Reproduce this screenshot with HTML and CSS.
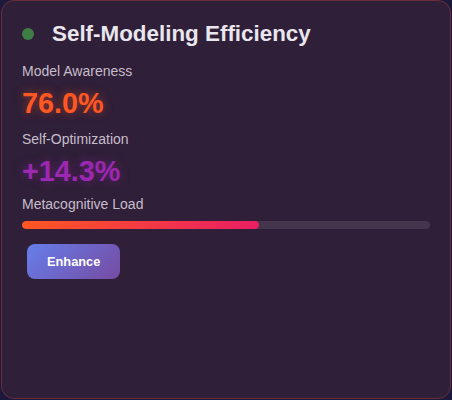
FILE: index.html
```html
<!DOCTYPE html>
<html lang="en">
<head>
<meta charset="utf-8">
<title>Self-Modeling Efficiency</title>
<link rel="stylesheet" href="styles.css">
</head>
<body>
<div class="card">
  <div class="card-header">
    <span class="status-dot"></span>
    <h3 class="card-title">Self-Modeling Efficiency</h3>
  </div>
  <div class="metric metric-first">
    <div class="metric-label">Model Awareness</div>
    <div class="metric-value value-orange">76.0%</div>
  </div>
  <div class="metric metric-second">
    <div class="metric-label">Self-Optimization</div>
    <div class="metric-value value-purple">+14.3%</div>
  </div>
  <div class="progress-section">
    <div class="metric-label progress-label">Metacognitive Load</div>
    <div class="progress-track">
      <div class="progress-fill" style="width: 58%"></div>
    </div>
  </div>
  <button class="btn-enhance">Enhance</button>
</div>
</body>
</html>
```
FILE: styles.css
```css
html, body {
  margin: 0;
  padding: 0;
  background: #1b1a3c;
  font-family: "Liberation Sans", Arial, sans-serif;
}

.card {
  box-sizing: border-box;
  width: 450px;
  height: 399px;
  margin: 0 0 0 1px;
  padding: 20px;
  background: #2f1f38;
  border: 1px solid #6a2d3a;
  border-radius: 13px;
}

.card-header {
  display: flex;
  align-items: center;
  gap: 18px;
  margin-bottom: 16px;
}

.status-dot {
  width: 12px;
  height: 12px;
  border-radius: 50%;
  background: #3f7d47;
  flex: none;
}

.card-title {
  margin: 0;
  font-size: 22.4px;
  font-weight: bold;
  color: #e9e6ee;
}

.metric-label {
  font-size: 14px;
  color: #c6bdcb;
  margin-bottom: 8px;
}

.metric-value {
  font-size: 28.8px;
  font-weight: bold;
}

.metric-first {
  margin-bottom: 11px;
}

.metric-second {
  margin-bottom: 8px;
}

.value-orange {
  color: #ff5722;
  text-shadow: 0 0 10px rgba(255, 87, 34, 0.5);
}

.value-purple {
  color: #9c27b0;
  text-shadow: 0 0 10px rgba(156, 39, 176, 0.5);
}

.progress-label {
  margin-bottom: 9px;
}

.progress-track {
  height: 8px;
  border-radius: 4px;
  background: rgba(255, 255, 255, 0.1);
  overflow: hidden;
}

.progress-fill {
  height: 100%;
  border-radius: 4px;
  background: linear-gradient(90deg, #ff5722, #e91e63);
}

.btn-enhance {
  margin: 15px 0 0 5px;
  padding: 10px 20px;
  border: none;
  border-radius: 8px;
  background: linear-gradient(135deg, #667eea, #764ba2);
  color: #ffffff;
  font-family: "Liberation Sans", Arial, sans-serif;
  font-size: 12.8px;
  font-weight: bold;
  line-height: normal;
  cursor: pointer;
}
```
